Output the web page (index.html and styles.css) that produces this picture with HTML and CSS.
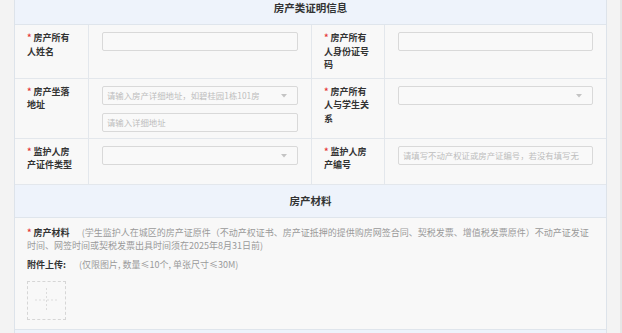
FILE: index.html
```html
<!DOCTYPE html>
<html lang="zh-CN">
<head>
    <meta charset="UTF-8">
    <meta name="viewport" content="width=device-width, initial-scale=1.0">
    <title>房产类证明信息</title>
    <link rel="stylesheet" href="styles.css">
</head>
<body>
    <div class="page">
        <div class="panel">
            <!-- 房产类证明信息 -->
            <div class="section-title">房产类证明信息</div>
            <div class="form-grid">
                <div class="label required">房产所有人姓名</div>
                <div class="field">
                    <div class="input"></div>
                </div>
                <div class="label required">房产所有人身份证号码</div>
                <div class="field last">
                    <div class="input"></div>
                </div>

                <div class="label required">房产坐落地址</div>
                <div class="field">
                    <div class="input select placeholder">请输入房产详细地址，如碧桂园1栋101房
                        <svg class="arrow" width="6" height="4" viewBox="0 0 6 4"><path d="M0 0h6L3 3.5z" fill="#c4c4c4"/></svg>
                    </div>
                    <div class="input placeholder">请输入详细地址</div>
                </div>
                <div class="label required">房产所有人与学生关系</div>
                <div class="field last">
                    <div class="input select">
                        <svg class="arrow" width="6" height="4" viewBox="0 0 6 4"><path d="M0 0h6L3 3.5z" fill="#c4c4c4"/></svg>
                    </div>
                </div>

                <div class="label required">监护人房产证件类型</div>
                <div class="field">
                    <div class="input select">
                        <svg class="arrow" width="6" height="4" viewBox="0 0 6 4"><path d="M0 0h6L3 3.5z" fill="#c4c4c4"/></svg>
                    </div>
                </div>
                <div class="label required">监护人房产编号</div>
                <div class="field last">
                    <div class="input placeholder">请填写不动产权证或房产证编号，若没有填写无</div>
                </div>
            </div>

            <!-- 房产材料 -->
            <div class="section-title">房产材料</div>
            <div class="material">
                <p class="material-desc">
                    <b class="material-name required">房产材料</b><span class="hint">(学生监护人在城区的房产证原件（不动产权证书、房产证抵押的提供购房网签合同、契税发票、增值税发票原件）不动产证发证时间、网签时间或契税发票出具时间须在2025年8月31日前)</span>
                </p>
                <p class="upload-line">
                    <b class="upload-name">附件上传:</b><span class="hint">(仅限图片, 数量≤10个, 单张尺寸≤30M)</span>
                </p>
                <div class="upload-box">
                    <svg width="23" height="24" viewBox="0 0 23 24">
                        <line x1="0" y1="12" x2="23" y2="12" stroke="#dcdcdc" stroke-width="1" stroke-dasharray="2 2"/>
                        <line x1="11.5" y1="0" x2="11.5" y2="24" stroke="#dcdcdc" stroke-width="1" stroke-dasharray="2 2"/>
                    </svg>
                </div>
            </div>

            <div class="section-title"></div>
        </div>
    </div>
</body>
</html>
```

FILE: styles.css
```css
body {
    margin: 0;
    background-color: #f3f3f3;
    color: #333;
    font-family: "Noto Sans CJK SC", "Noto Sans", sans-serif;
    font-size: 9px;
    line-height: 13.5px;
    overflow: hidden;
}

.page {
    padding: 0 13px 0 14px;
    border-right: 2px solid #e6e6e6;
}

.panel {
    margin-top: -9px;
    background-color: #f8f8f8;
    border: 1px solid #dde3ea;
}

.section-title {
    height: 33px;
    box-sizing: border-box;
    line-height: 32px;
    text-align: center;
    font-size: 10.5px;
    font-weight: bold;
    color: #333;
    background-color: #eef3fb;
    border-bottom: 1px solid #dfe5ec;
}

.form-grid {
    display: grid;
    grid-template-columns: 74px 223px 73px minmax(0, 1fr);
    grid-auto-rows: minmax(46px, auto);
}

.label,
.field {
    box-sizing: border-box;
    border-bottom: 1px solid #e3e7ec;
    border-right: 1px solid #e3e7ec;
}

.label {
    padding: 6px 12px;
    font-weight: bold;
    color: #333;
}

.required::before {
    content: "* ";
    color: #e5383b;
}

.field {
    display: flex;
    flex-direction: column;
    gap: 8px;
    padding: 7px 13px 6px;
    min-width: 0;
}

.field.last {
    border-right: none;
}

.input {
    position: relative;
    height: 19px;
    box-sizing: border-box;
    padding: 0 4px;
    line-height: 17px;
    background-color: #f9f9f9;
    border: 1px solid #d9d9d9;
    border-radius: 2px;
    white-space: nowrap;
    overflow: hidden;
}

.placeholder {
    color: #bdbdbd;
    font-size: 8.4px;
}

.select .arrow {
    position: absolute;
    right: 10px;
    top: 7px;
}

.material {
    padding: 8px 12px 9px;
    border-bottom: 1px solid #dfe5ec;
}

.material p {
    margin: 0;
    line-height: 13px;
}

.material-name {
    margin-right: 12px;
}

.hint {
    color: #9a9a9a;
}

.material .upload-line {
    margin-top: 6px;
}

.upload-name {
    margin-right: 13px;
}

.upload-box {
    width: 39px;
    height: 39px;
    box-sizing: border-box;
    margin-top: 10px;
    border: 1px dashed #d6d6d6;
    display: flex;
    align-items: center;
    justify-content: center;
}
```
